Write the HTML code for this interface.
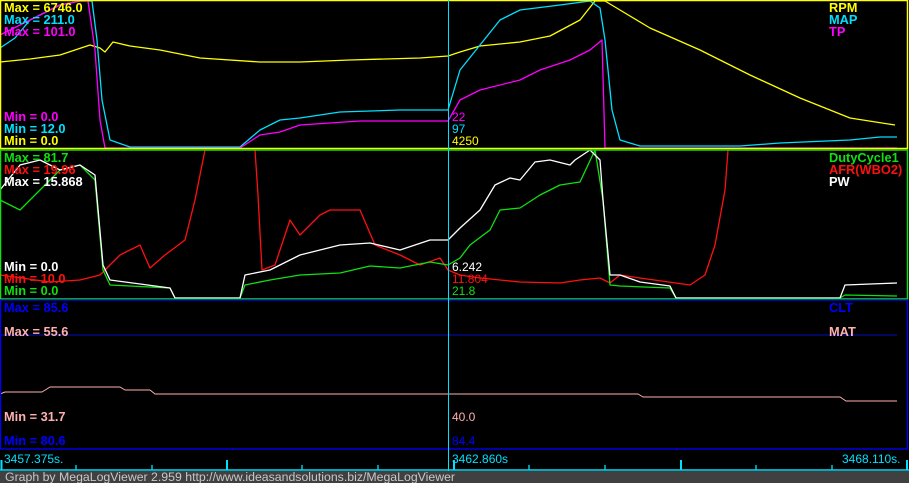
<!DOCTYPE html>
<html><head><meta charset="utf-8"><style>
html,body{margin:0;padding:0;background:#000;width:909px;height:483px;overflow:hidden}
svg{display:block}
text{font-family:"Liberation Sans",sans-serif;font-size:12px}
.b{font-weight:bold;font-size:12.8px}
</style></head><body>
<svg width="909" height="483" viewBox="0 0 909 483" xmlns="http://www.w3.org/2000/svg">
<rect width="909" height="483" fill="#000"/>
<rect x="0" y="471" width="909" height="12" fill="#404040"/>
<g fill="none" stroke-width="1.3" stroke-linejoin="round">
<polyline stroke="#ffff00" points="0,62 30,59 60,55 90,45 100,48 105,52 113,42 130,46 160,50 200,58 260,62 300,62 350,60 420,58 448,56 460,52 480,46 520,42 550,36 580,20 595,1 605,1 620,10 650,28 700,50 750,75 800,98 850,118 895,125"/>
<polyline stroke="#00e0ff" points="0,48 15,38 30,20 60,5 80,1 92,1 97,40 102,100 110,140 130,147 240,147 260,130 280,120 300,118 340,112 400,110 448,110 460,70 480,45 500,20 520,10 560,5 590,1 600,8 605,40 612,110 620,140 640,146 740,146 780,143 850,140 880,137 897,137"/>
<polyline stroke="#ff00ff" points="0,35 30,20 60,5 80,1 88,1 95,50 100,120 105,148 240,148 260,135 280,132 300,125 360,121 448,121 460,100 480,90 520,80 540,70 570,60 590,50 602,40 605,148 897,148"/>
<polyline stroke="#ff1010" points="0,275 50,282 80,280 100,275 120,255 140,245 150,268 165,255 185,240 195,200 205,150 255,150 258,195 262,270 275,265 290,220 300,235 320,215 330,210 360,210 375,245 400,255 420,265 440,258 448,270 460,275 480,278 520,282 560,283 580,280 600,278 610,283 620,275 640,278 690,285 705,275 715,245 725,190 728,150 897,150"/>
<polyline stroke="#10e010" points="0,200 20,210 40,190 60,170 80,165 95,180 103,270 110,285 170,288 175,298 240,298 245,285 270,280 300,275 340,273 370,266 400,268 430,262 448,265 460,258 470,245 490,230 500,210 520,208 540,195 560,185 580,182 595,150 603,200 610,285 620,286 670,288 676,298 840,298 845,295 897,296"/>
<polyline stroke="#ffffff" points="0,190 20,165 40,160 60,170 80,165 95,175 103,265 110,280 170,288 175,298 240,298 245,275 270,270 300,255 340,245 370,243 400,250 430,240 448,240 460,228 480,210 495,185 510,178 520,180 535,162 550,160 570,165 575,160 590,150 600,160 603,200 610,275 620,275 640,282 670,286 676,298 840,298 845,285 897,283"/>
<line x1="0" y1="335" x2="897" y2="335" stroke="#0010c0" stroke-width="1"/>
<polyline stroke="#ffb0b0" stroke-width="1" points="0,394 5,392 42,392 50,387 120,387 125,390 150,390 155,394 638,394 643,397 840,397 846,401 897,401"/>
</g>
<rect x="0.5" y="0.5" width="907" height="148" fill="none" stroke="#ffff00" stroke-width="1.5"/>
<rect x="0.5" y="150" width="907" height="149" fill="none" stroke="#10e010" stroke-width="1.5"/>
<rect x="0.5" y="300" width="907" height="149" fill="none" stroke="#0000ff" stroke-width="1.3"/>
<line x1="448.5" y1="0" x2="448.5" y2="471" stroke="#00e0ff" stroke-width="1"/>
<line x1="0" y1="470" x2="909" y2="470" stroke="#00e0ff" stroke-width="1.5"/>
<g stroke="#00e0ff" stroke-width="1.3">
<line x1="1.5" y1="460" x2="1.5" y2="470" stroke-width="2"/><line x1="76" y1="465" x2="76" y2="470"/><line x1="152" y1="465" x2="152" y2="470"/><line x1="227" y1="460" x2="227" y2="470" stroke-width="2"/><line x1="302" y1="465" x2="302" y2="470"/><line x1="378" y1="465" x2="378" y2="470"/><line x1="454" y1="460" x2="454" y2="470" stroke-width="2"/><line x1="529" y1="465" x2="529" y2="470"/><line x1="605" y1="465" x2="605" y2="470"/><line x1="681" y1="460" x2="681" y2="470" stroke-width="2"/><line x1="756" y1="465" x2="756" y2="470"/><line x1="832" y1="465" x2="832" y2="470"/><line x1="907" y1="460" x2="907" y2="470" stroke-width="2"/>
</g>
<text x="4" y="463" fill="#00e0ff">3457.375s.</text>
<text x="452" y="463" fill="#00e0ff">3462.860s</text>
<text x="842" y="463" fill="#00e0ff">3468.110s.</text>
<text x="5" y="481" fill="#c8c8c8" style="font-size:12.3px">Graph by MegaLogViewer 2.959 http://www.ideasandsolutions.biz/MegaLogViewer</text>
<text class="b" x="4" y="12" fill="#ffff00">Max = 6746.0</text>
<text class="b" x="4" y="24" fill="#00e0ff">Max = 211.0</text>
<text class="b" x="4" y="36" fill="#ff00ff">Max = 101.0</text>
<text class="b" x="4" y="121" fill="#ff00ff">Min = 0.0</text>
<text class="b" x="4" y="133" fill="#00e0ff">Min = 12.0</text>
<text class="b" x="4" y="145" fill="#ffff00">Min = 0.0</text>
<text class="b" x="829" y="12" fill="#ffff00">RPM</text>
<text class="b" x="829" y="24" fill="#00e0ff">MAP</text>
<text class="b" x="829" y="36" fill="#ff00ff">TP</text>
<text class="b" x="4" y="162" fill="#10e010">Max = 81.7</text>
<text class="b" x="4" y="174" fill="#ff1010">Max = 19.96</text>
<text class="b" x="4" y="186" fill="#ffffff">Max = 15.868</text>
<text class="b" x="4" y="271" fill="#ffffff">Min = 0.0</text>
<text class="b" x="4" y="283" fill="#ff1010">Min = 10.0</text>
<text class="b" x="4" y="295" fill="#10e010">Min = 0.0</text>
<text class="b" x="829" y="162" fill="#10e010">DutyCycle1</text>
<text class="b" x="829" y="174" fill="#ff1010">AFR(WBO2)</text>
<text class="b" x="829" y="186" fill="#ffffff">PW</text>
<text class="b" x="4" y="312" fill="#0000ff">Max = 85.6</text>
<text class="b" x="4" y="336" fill="#ffb0b0">Max = 55.6</text>
<text class="b" x="4" y="421" fill="#ffb0b0">Min = 31.7</text>
<text class="b" x="4" y="445" fill="#0000ff">Min = 80.6</text>
<text class="b" x="829" y="312" fill="#0000ff">CLT</text>
<text class="b" x="829" y="336" fill="#ffb0b0">MAT</text>
<text x="452" y="121" fill="#ff00ff">22</text>
<text x="452" y="133" fill="#00e0ff">97</text>
<text x="452" y="145" fill="#ffff00">4250</text>
<text x="452" y="271" fill="#ffffff">6.242</text>
<text x="452" y="283" fill="#ff1010">11.804</text>
<text x="452" y="295" fill="#10e010">21.8</text>
<text x="452" y="421" fill="#ffb0b0">40.0</text>
<text x="452" y="445" fill="#0000ff">84.4</text>
</svg>
</body></html>
